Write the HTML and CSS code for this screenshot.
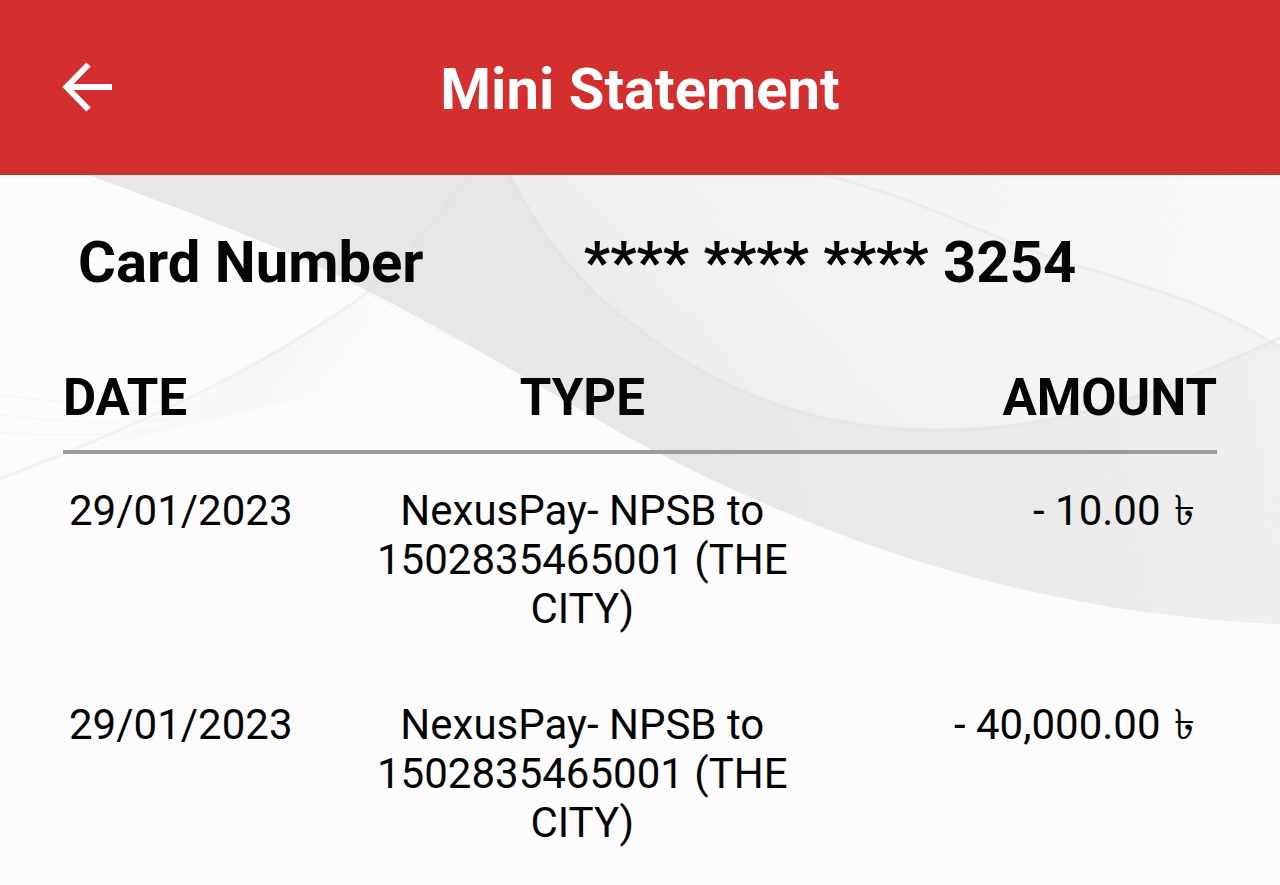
FILE: index.html
```html
<!DOCTYPE html>
<html lang="en">
<head>
<meta charset="utf-8">
<meta name="viewport" content="width=device-width, initial-scale=1">
<title>Mini Statement</title>
<link rel="stylesheet" href="styles.css">
</head>
<body class="page">
<header class="app-bar">
  <button class="back" type="button" aria-label="Back">
    <svg class="back-icon" viewBox="0 0 50 50" aria-hidden="true"><path d="M26.500 2.500 4.500 25 26.500 47.500M5 25H50"/></svg>
  </button>
  <h1 class="title">Mini Statement</h1>
</header>
<main class="content">
  <svg class="backdrop" viewBox="0 0 1280 711" preserveAspectRatio="none" aria-hidden="true">
    <defs>
      <linearGradient id="band" x1="560" y1="260" x2="850" y2="0" gradientUnits="userSpaceOnUse">
        <stop offset="0" stop-color="#e8e8e8"/><stop offset="0.5" stop-color="#f0f0f0"/><stop offset="1" stop-color="#f4f4f4"/>
      </linearGradient>
      <linearGradient id="sweep" x1="825" y1="0" x2="1280" y2="0" gradientUnits="userSpaceOnUse">
        <stop offset="0" stop-color="#f4f4f4"/><stop offset="1" stop-color="#fafafa"/>
      </linearGradient>
      <linearGradient id="fold" x1="640" y1="260" x2="1280" y2="160" gradientUnits="userSpaceOnUse">
        <stop offset="0" stop-color="#e7e7e7"/><stop offset="0.5" stop-color="#eaeaea"/><stop offset="1" stop-color="#f0f0f0"/>
      </linearGradient>
      <linearGradient id="leaf" x1="150" y1="200" x2="270" y2="290" gradientUnits="userSpaceOnUse">
        <stop offset="0" stop-color="#fbfbfb"/><stop offset="0.6" stop-color="#f7f7f7"/><stop offset="1" stop-color="#fbfbfb"/>
      </linearGradient>
      <pattern id="mesh" width="8" height="8" patternUnits="userSpaceOnUse" patternTransform="rotate(28)">
        <path d="M0 4H8M4 0V8" fill="none" stroke="#dedede" stroke-width="1"/>
      </pattern>
    </defs>
    <path d="M0 0H1280V711H0Z" fill="#fcfcfc"/>
    <path d="M0 304C150 262 250 190 355 127L480 190C330 215 190 245 0 304Z" fill="url(#leaf)"/>
    <path d="M88 0C220 48 310 85 355 110C440 152 530 206 620 258C840 378 1050 440 1280 450V0Z" fill="url(#fold)"/>
    <path d="M510 0C545 70 590 120 640 155C770 255 900 262 1000 252C1110 240 1200 200 1280 163V0Z" fill="url(#band)"/>
    <path d="M825 0C940 30 990 65 1075 90S1210 130 1280 172V0Z" fill="url(#sweep)"/>
    <path d="M470 0H515C550 80 590 110 625 140L520 190 355 127C400 90 430 65 470 0Z" fill="url(#mesh)" opacity=".22"/>
    <path d="M840 0H1280V150C1120 110 1000 50 840 0Z" fill="url(#mesh)" opacity=".08"/>
    <g fill="none" stroke="#dfdfdf" stroke-width="3">
      <path d="M470 0C420 65 390 100 355 127C250 200 130 255 0 304" opacity=".35"/>
      <path d="M510 0C545 70 590 120 640 155C770 255 900 262 1000 252C1110 240 1200 200 1280 163" opacity=".5"/>
      <path d="M825 0C940 30 990 65 1075 90S1210 130 1280 172" opacity=".4"/>
      <path d="M0 240Q80 252 170 245M0 220Q80 233 190 225M0 258Q80 264 160 255" stroke-width="1" opacity=".25"/>
    </g>
    <path d="M0 711V640C150 550 270 480 380 380C340 500 330 610 190 711Z" fill="#fafafa" opacity=".6"/>
  </svg>
  <dl class="card">
    <dt class="card-label">Card Number</dt>
    <dd class="card-value">**** **** **** 3254</dd>
  </dl>
  <table class="statement">
    <thead>
      <tr><th class="head date" scope="col">DATE</th><th class="head type" scope="col">TYPE</th><th class="head amount" scope="col">AMOUNT</th></tr>
    </thead>
    <tbody>
      <tr><td class="cell date">29/01/2023</td><td class="cell type">NexusPay- NPSB to 1502835465001 (THE CITY)</td><td class="cell amount">- 10.00 <span class="taka">৳</span></td></tr>
      <tr><td class="cell date">29/01/2023</td><td class="cell type">NexusPay- NPSB to 1502835465001 (THE CITY)</td><td class="cell amount">- 40,000.00 <span class="taka">৳</span></td></tr>
    </tbody>
  </table>
</main>
</body>
</html>
```
FILE: styles.css
```css
* { box-sizing: border-box; }

.page {
  margin: 0;
  min-height: 100vh;
  display: flex;
  flex-direction: column;
  font-family: Roboto, "Noto Sans", sans-serif;
  color: #050505;
  background: #fcfcfc;
}

.app-bar {
  display: grid;
  grid-template-columns: 50px 1fr 50px;
  align-items: center;
  padding: 50px 62px;
  background: #d32f2f;
  border-bottom: 1px solid #b93a3a;
  color: #fff;
}

.back {
  display: flex;
  padding: 0;
  border: 0;
  background: none;
  color: inherit;
  cursor: pointer;
}

.back-icon {
  width: 50px;
  height: 50px;
  fill: none;
  stroke: currentColor;
  stroke-width: 6;
}

.title {
  margin: 0;
  padding-top: 4px;
  font-size: 58px;
  line-height: 70px;
  font-weight: 700;
  text-align: center;
}

.content {
  position: relative;
  flex: 1;
  padding: 52px 63px 0;
}

.backdrop {
  position: absolute;
  inset: 0;
  z-index: -1;
  width: 100%;
  height: 100%;
}

.card {
  display: grid;
  grid-template-columns: 45% 55%;
  margin: 0;
  padding: 0 15px;
  font-size: 58px;
  line-height: 70px;
  font-weight: 700;
}

.card-value { margin: 0; }

.statement {
  width: 100%;
  margin-top: 62px;
  table-layout: fixed;
  border-collapse: collapse;
}

.head {
  padding: 8px 0 22px;
  border-bottom: 4px solid #9c9c9c;
  font-size: 51px;
  line-height: 61px;
  font-weight: 700;
}

.cell {
  padding: 32px 0 35px;
  font-size: 42px;
  line-height: 49px;
  vertical-align: top;
}

.date {
  width: 24%;
  text-align: left;
}

.type {
  width: 42%;
  text-align: center;
}

.amount {
  width: 34%;
  text-align: right;
}

.cell.date { padding-left: 6px; }

.cell.amount { padding-right: 20px; }

.taka {
  display: inline-block;
  min-width: 26px;
  text-align: center;
}
```
